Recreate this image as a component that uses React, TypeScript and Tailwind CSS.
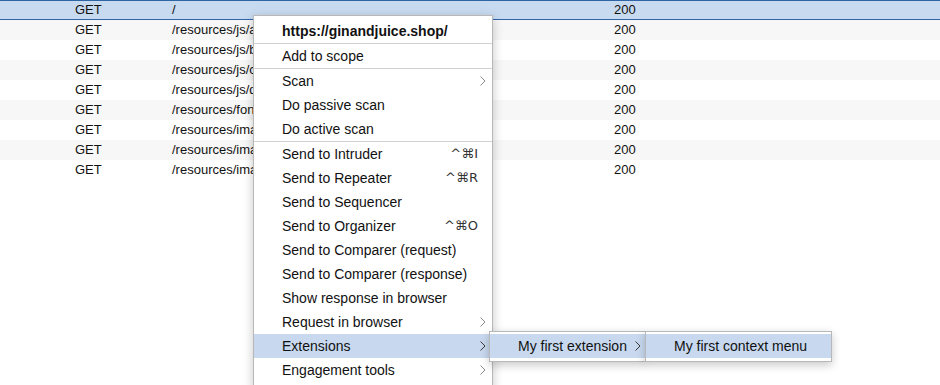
const rows = [
  { method: 'GET', path: '/', status: '200' },
  { method: 'GET', path: '/resources/js/a.js', status: '200' },
  { method: 'GET', path: '/resources/js/b.js', status: '200' },
  { method: 'GET', path: '/resources/js/c.js', status: '200' },
  { method: 'GET', path: '/resources/js/d.js', status: '200' },
  { method: 'GET', path: '/resources/fonts/e.woff', status: '200' },
  { method: 'GET', path: '/resources/images/f.svg', status: '200' },
  { method: 'GET', path: '/resources/images/g.svg', status: '200' },
  { method: 'GET', path: '/resources/images/h.svg', status: '200' },
]

type Item = { label: string; shortcut?: string; sub?: boolean; active?: boolean; sepBefore?: boolean }

const items: Item[] = [
  { label: 'Add to scope', sepBefore: true },
  { label: 'Scan', sub: true, sepBefore: true },
  { label: 'Do passive scan' },
  { label: 'Do active scan' },
  { label: 'Send to Intruder', shortcut: '^⌘I', sepBefore: true },
  { label: 'Send to Repeater', shortcut: '^⌘R' },
  { label: 'Send to Sequencer' },
  { label: 'Send to Organizer', shortcut: '^⌘O' },
  { label: 'Send to Comparer (request)' },
  { label: 'Send to Comparer (response)' },
  { label: 'Show response in browser' },
  { label: 'Request in browser', sub: true },
  { label: 'Extensions', sub: true, active: true },
  { label: 'Engagement tools', sub: true },
]

function Chevron({ dark }: { dark?: boolean }) {
  return (
    <svg width="6" height="10" viewBox="0 0 6 10" className="shrink-0">
      <polyline
        points="0.5,0.5 5,5 0.5,9.5"
        fill="none"
        stroke={dark ? '#3a3a3a' : '#8a8a8a'}
        strokeWidth="1"
      />
    </svg>
  )
}

function MenuRow({ item }: { item: Item }) {
  return (
    <>
      {item.sepBefore && <div className="h-px bg-[#d2d2d2]" />}
      <div
        className={`flex h-[24px] items-center pl-[28px] ${item.active ? 'bg-[#c8d9ef]' : ''}`}
      >
        <span className="flex-1 whitespace-nowrap">{item.label}</span>
        {item.shortcut && (
          <span className="whitespace-nowrap text-[#333] font-['DejaVu_Sans',sans-serif] text-[13px]">{item.shortcut}</span>
        )}
        <span className="flex w-[14px] justify-end pr-[6px]">
          {item.sub && <Chevron dark={item.active} />}
        </span>
      </div>
    </>
  )
}

export default function App() {
  return (
    <div className="relative h-[385px] w-[940px] overflow-hidden bg-white font-['Liberation_Sans',Arial,sans-serif] text-[#111]">
      {/* request table */}
      <div className="text-[13px]">
        {rows.map((r, i) => (
          <div
            key={i}
            className={`flex h-[20px] items-center ${
              i === 0
                ? 'border-y border-[#2f65a5] bg-[#c8daf0]'
                : i % 2 === 1
                  ? 'bg-[#f7f7f7]'
                  : 'bg-white'
            }`}
          >
            <span className="w-[172px] pl-[75px]">{r.method}</span>
            <span className="w-[442px] whitespace-nowrap">{r.path}</span>
            <span>{r.status}</span>
          </div>
        ))}
      </div>

      {/* context menu */}
      <div className="absolute left-[253px] top-[15px] w-[240px] border border-[#b8b8b8] bg-white pb-[6px] pt-[3px] text-[14px] shadow-[0_3px_10px_rgba(0,0,0,0.22)]">
        <div className="flex h-[24px] items-center pl-[28px] font-bold">https://ginandjuice.shop/</div>
        {items.map((it) => (
          <MenuRow key={it.label} item={it} />
        ))}
      </div>

      {/* extensions submenu */}
      <div className="absolute left-[489px] top-[331px] w-[157px] border border-[#b8b8b8] bg-white pb-[3px] pt-[2px] text-[14px] shadow-[0_3px_10px_rgba(0,0,0,0.22)]">
        <div className="flex h-[24px] items-center bg-[#c8d9ef] pl-[28px]">
          <span className="flex-1 whitespace-nowrap">My first extension</span>
          <span className="flex w-[14px] justify-end pr-[4px]">
            <Chevron dark />
          </span>
        </div>
      </div>

      <div className="absolute left-[645px] top-[331px] w-[187px] border border-[#b8b8b8] bg-white pb-[3px] pt-[2px] text-[14px] shadow-[0_3px_10px_rgba(0,0,0,0.22)]">
        <div className="flex h-[24px] items-center bg-[#c8d9ef] pl-[28px]">
          <span className="whitespace-nowrap">My first context menu</span>
        </div>
      </div>
    </div>
  )
}
